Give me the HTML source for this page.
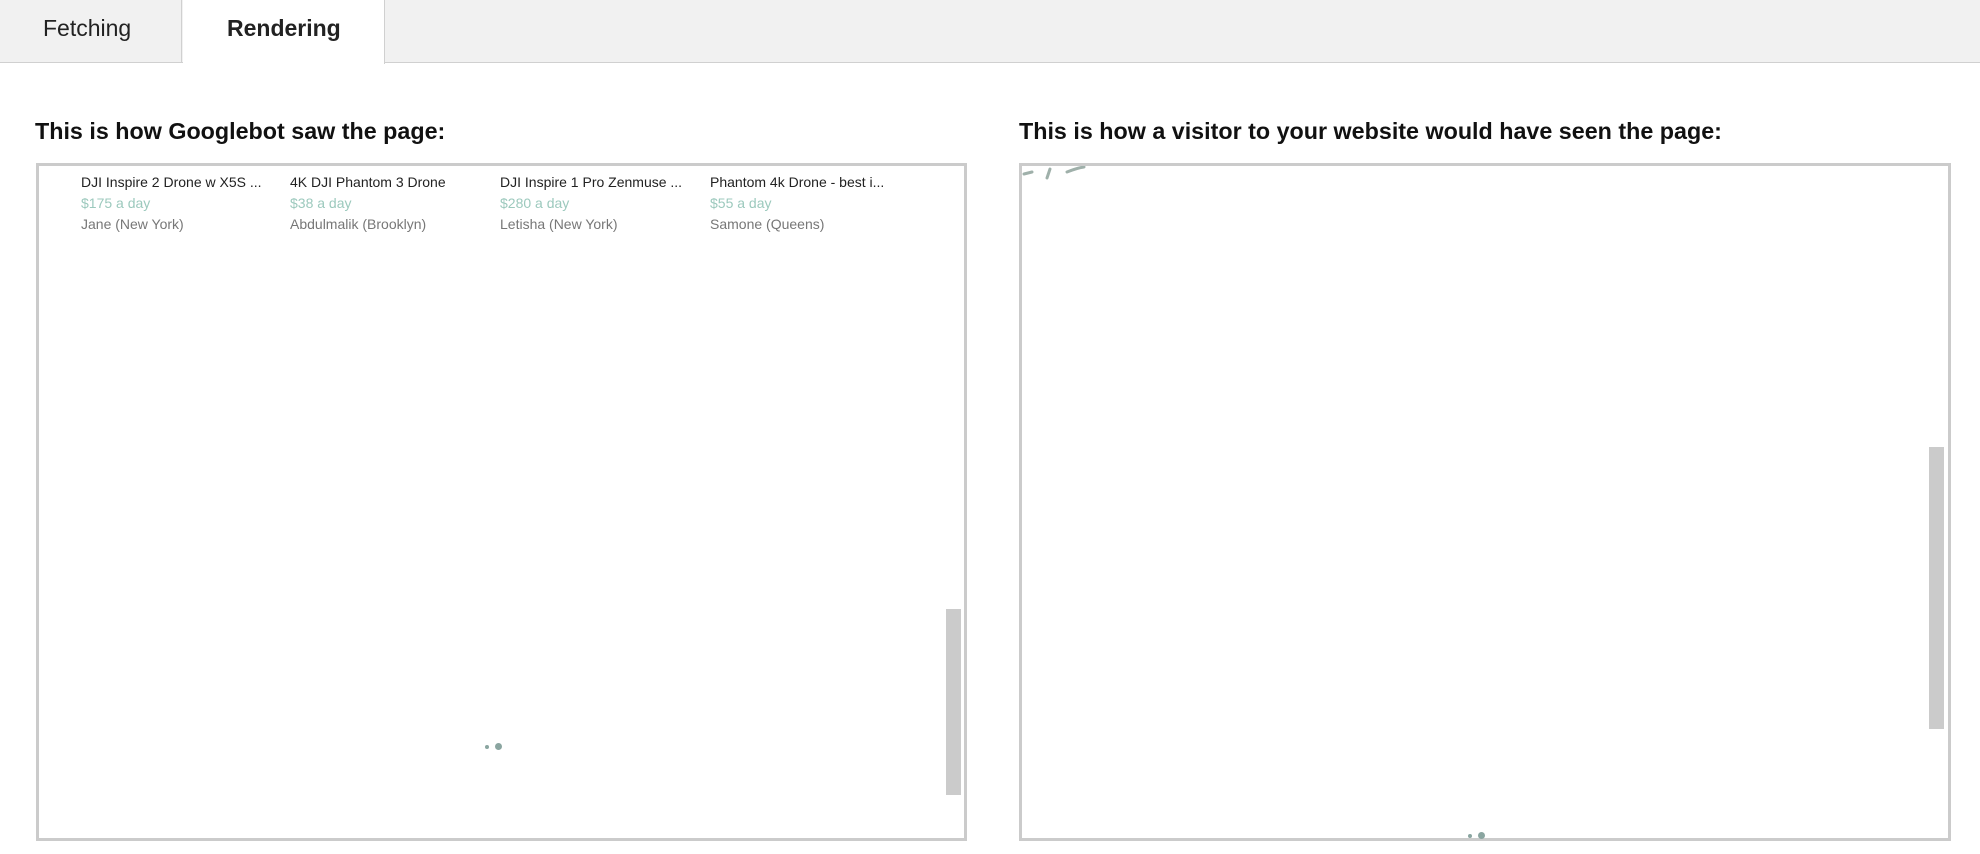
<!DOCTYPE html>
<html><head><meta charset="utf-8"><style>
body{margin:0;width:1980px;height:854px;background:#fff;font-family:"Liberation Sans",Arial,sans-serif;position:relative;overflow:hidden}
.bar{position:absolute;left:0;top:0;width:1980px;height:62px;background:#f1f1f1;border-bottom:1px solid #d0d0d0}
.tab{position:absolute;top:0;height:63px;line-height:56px;font-size:23px;color:#222}
.t1{left:0;width:182px;border-right:1px solid #d0d0d0;padding-left:43px;box-sizing:border-box}
.t2{left:183px;width:202px;background:#fff;border-right:1px solid #d0d0d0;font-weight:bold;padding-left:44px;box-sizing:border-box;height:64px}
h2{position:absolute;margin:0;font-size:23.3px;font-weight:bold;color:#111;top:118px}
.box{position:absolute;top:163px;height:678px;border:3px solid #cbcbcb;box-sizing:border-box;background:#fff}
.sb{position:absolute;background:#cbcbcb}
.it{position:absolute;font-size:14px;line-height:21px}
.it .a{color:#222}.it .b{color:#9cc9bd}.it .c{color:#777}
.dot{position:absolute;border-radius:50%;background:#8aa5a0}
</style></head><body>
<div class="bar"></div>
<div class="tab t1">Fetching</div>
<div class="tab t2">Rendering</div>
<h2 style="left:35px">This is how Googlebot saw the page:</h2>
<h2 style="left:1019px">This is how a visitor to your website would have seen the page:</h2>
<div class="box" style="left:36px;width:931px"></div>
<div class="box" style="left:1019px;width:932px"></div>
<div class="it" style="left:81px;top:172px"><div class="a">DJI Inspire 2 Drone w X5S ...</div><div class="b">$175 a day</div><div class="c">Jane (New York)</div></div>
<div class="it" style="left:290px;top:172px"><div class="a">4K DJI Phantom 3 Drone</div><div class="b">$38 a day</div><div class="c">Abdulmalik (Brooklyn)</div></div>
<div class="it" style="left:500px;top:172px"><div class="a">DJI Inspire 1 Pro Zenmuse ...</div><div class="b">$280 a day</div><div class="c">Letisha (New York)</div></div>
<div class="it" style="left:710px;top:172px"><div class="a">Phantom 4k Drone - best i...</div><div class="b">$55 a day</div><div class="c">Samone (Queens)</div></div>
<div class="sb" style="left:946px;top:609px;width:15px;height:186px"></div>
<div class="sb" style="left:1929px;top:447px;width:15px;height:282px"></div>
<div class="dot" style="left:485px;top:745px;width:4px;height:4px"></div>
<div class="dot" style="left:495px;top:743px;width:7px;height:7px"></div>
<div class="dot" style="left:1468px;top:834px;width:4px;height:4px"></div>
<div class="dot" style="left:1478px;top:832px;width:7px;height:7px"></div>
<svg style="position:absolute;left:1022px;top:166px" width="80" height="20"><path d="M2 8 L10 6 M28 3 L25 12 M45 6 Q55 2 62 1" stroke="#9fb0aa" stroke-width="3" fill="none" stroke-linecap="round"/></svg>
</body></html>
